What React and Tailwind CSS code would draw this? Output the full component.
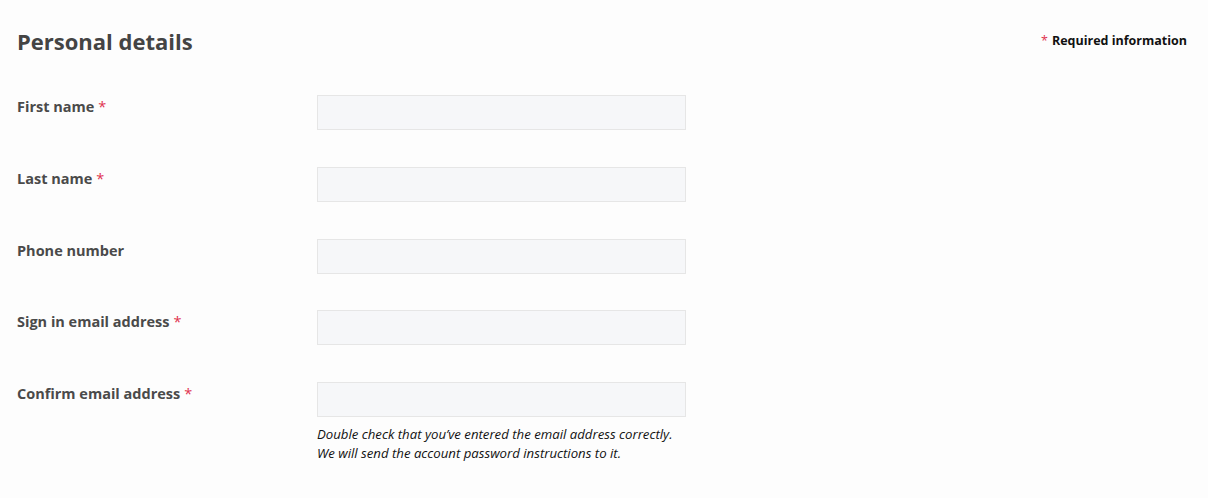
export default function App() {
  const fields = [
    { label: 'First name', required: true },
    { label: 'Last name', required: true },
    { label: 'Phone number', required: false },
    { label: 'Sign in email address', required: true },
    { label: 'Confirm email address', required: true, hint: true },
  ];

  return (
    <div className="min-h-screen bg-[#fdfdfd] pl-[17px] pr-[21px] pt-[26px]" style={{ fontFamily: '"Open Sans", Lato, sans-serif' }}>
      <div className="flex items-start justify-between">
        <h1 className="text-[22px] font-bold leading-[30px] text-[#444444]">Personal details</h1>
        <p className="mt-[6px] text-[12.5px] font-bold text-[#111111]">
          <span className="mr-[4px] font-normal text-[#e0344f]">*</span>Required information
        </p>
      </div>

      <div className="mt-[39px] flex flex-col gap-[36.75px]">
        {fields.map((f) => (
          <div key={f.label} className="flex">
            <label className="w-[300px] shrink-0 pt-[2px] text-[14.5px] font-bold leading-[20px] text-[#4a4a4a]">
              {f.label}
              {f.required && <span className="ml-[4px] font-normal text-[#e0344f]">*</span>}
            </label>
            <div>
              <input className="block h-[35px] w-[369px] border border-[#e6e6e6] bg-[#f6f7f9] outline-none" />
              {f.hint && (
                <p className="mt-[8px] text-[13.2px] italic leading-[19px] text-[#111111]">
                  Double check that you’ve entered the email address correctly.
                  <br />
                  We will send the account password instructions to it.
                </p>
              )}
            </div>
          </div>
        ))}
      </div>
    </div>
  );
}
